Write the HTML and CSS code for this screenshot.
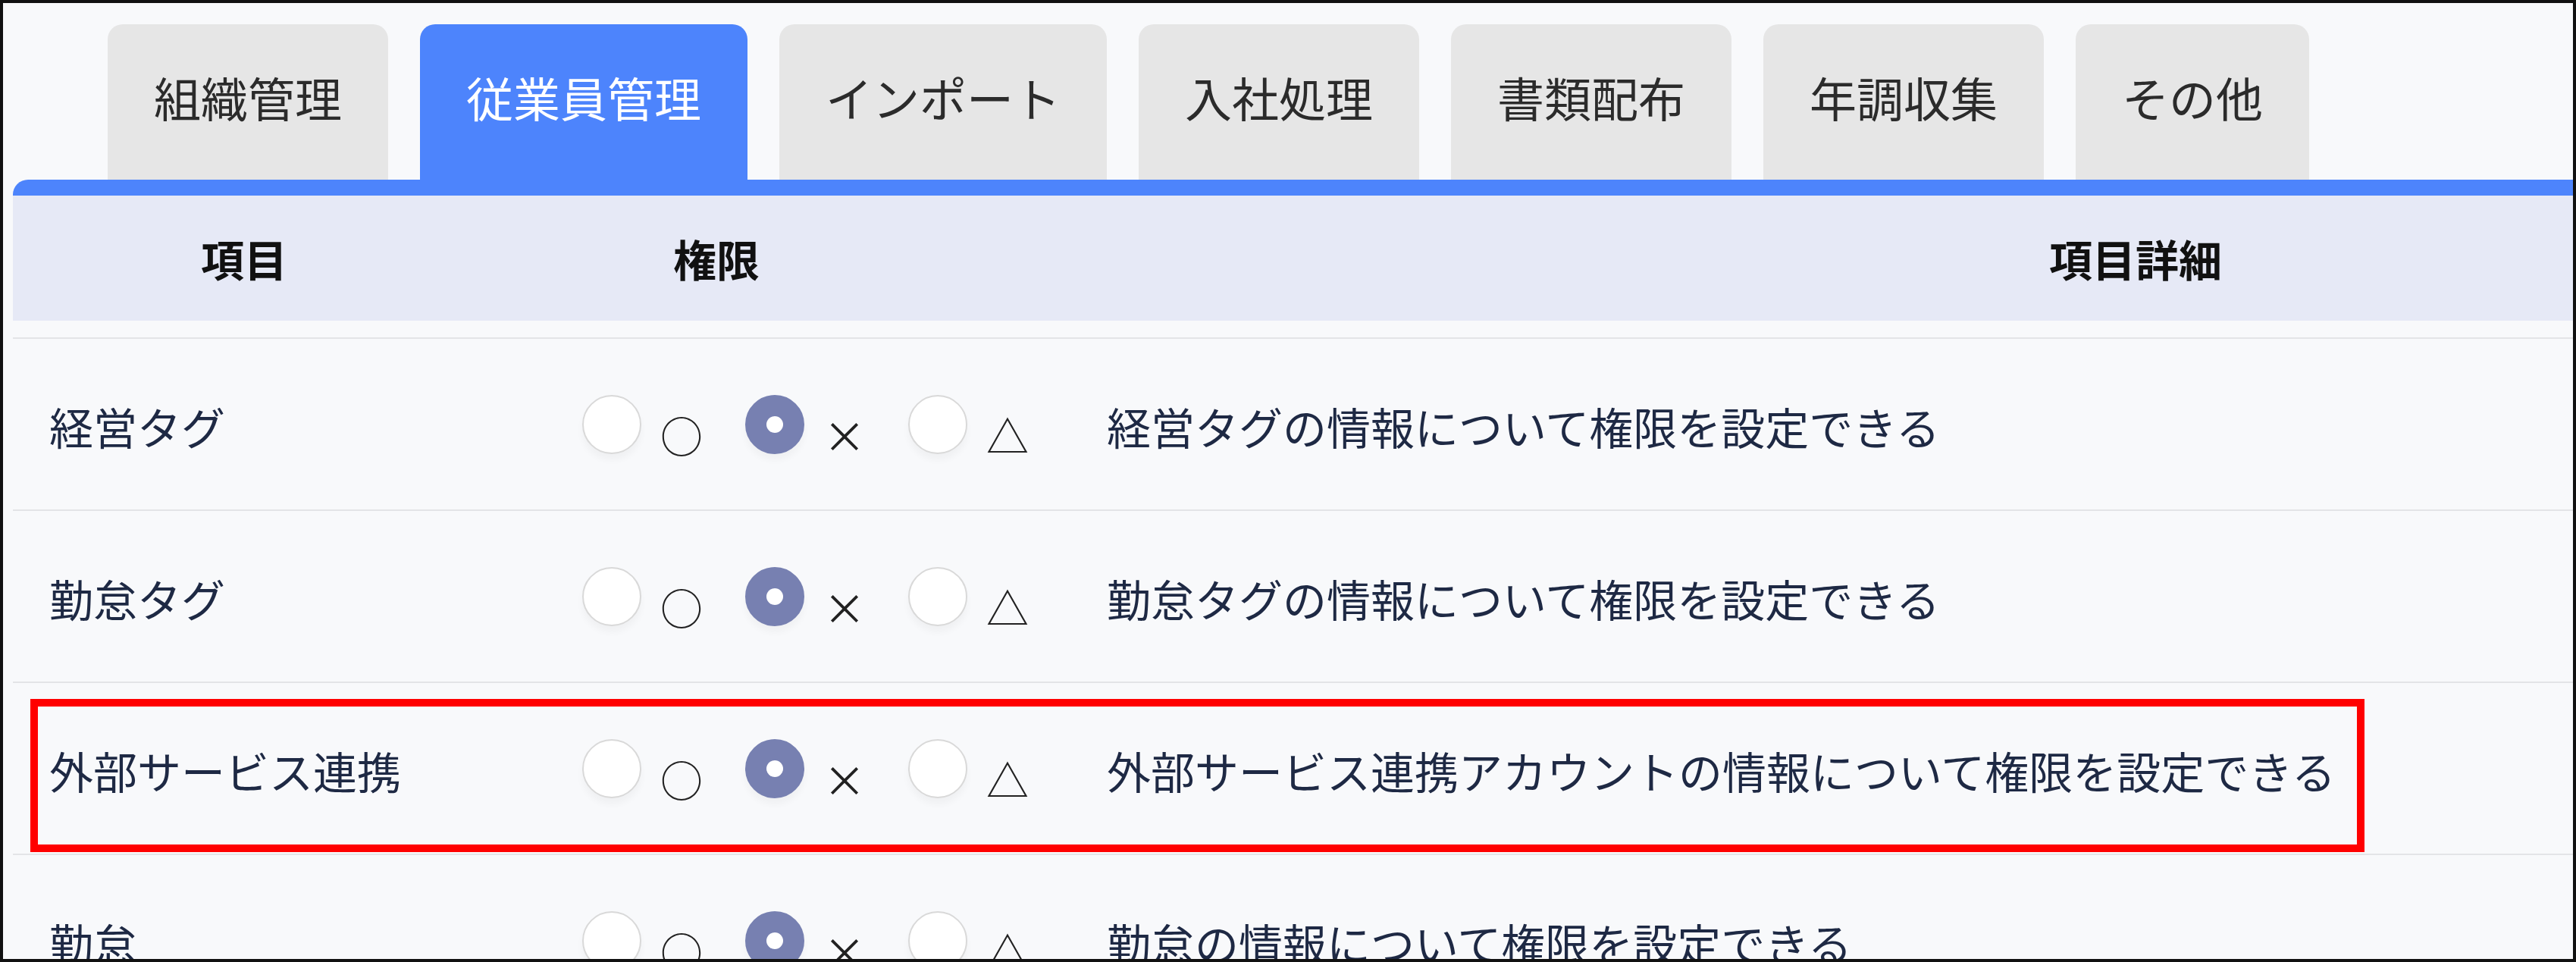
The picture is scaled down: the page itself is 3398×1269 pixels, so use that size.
FILE: index.html
```html
<!DOCTYPE html>
<html lang="ja">
<head>
<meta charset="utf-8">
<title>権限設定</title>
<link rel="stylesheet" href="styles.css">
</head>
<body>
<div class="frame">
  <div class="content">
    <nav class="tabs">
      <div class="tab">組織管理</div>
      <div class="tab active">従業員管理</div>
      <div class="tab">インポート</div>
      <div class="tab">入社処理</div>
      <div class="tab">書類配布</div>
      <div class="tab">年調収集</div>
      <div class="tab">その他</div>
    </nav>
    <div class="bar"></div>
    <div class="thead">
      <div class="th">項目</div>
      <div class="th">権限</div>
      <div class="th">項目詳細</div>
    </div>
    <div class="tbody">
      <div class="row">
        <div class="label">経営タグ</div>
        <div class="opts">
          <span class="opt"><span class="radio"></span><span class="mark">○</span></span>
          <span class="opt"><span class="radio on"></span><span class="mark">×</span></span>
          <span class="opt"><span class="radio"></span><span class="mark">△</span></span>
        </div>
        <div class="desc">経営タグの情報について権限を設定できる</div>
      </div>
      <div class="row">
        <div class="label">勤怠タグ</div>
        <div class="opts">
          <span class="opt"><span class="radio"></span><span class="mark">○</span></span>
          <span class="opt"><span class="radio on"></span><span class="mark">×</span></span>
          <span class="opt"><span class="radio"></span><span class="mark">△</span></span>
        </div>
        <div class="desc">勤怠タグの情報について権限を設定できる</div>
      </div>
      <div class="row highlighted">
        <div class="label">外部サービス連携</div>
        <div class="opts">
          <span class="opt"><span class="radio"></span><span class="mark">○</span></span>
          <span class="opt"><span class="radio on"></span><span class="mark">×</span></span>
          <span class="opt"><span class="radio"></span><span class="mark">△</span></span>
        </div>
        <div class="desc">外部サービス連携アカウントの情報について権限を設定できる</div>
        <div class="callout"></div>
      </div>
      <div class="row">
        <div class="label">勤怠</div>
        <div class="opts">
          <span class="opt"><span class="radio"></span><span class="mark">○</span></span>
          <span class="opt"><span class="radio on"></span><span class="mark">×</span></span>
          <span class="opt"><span class="radio"></span><span class="mark">△</span></span>
        </div>
        <div class="desc">勤怠の情報について権限を設定できる</div>
      </div>
    </div>
  </div>
</div>
</body>
</html>
```

FILE: styles.css
```css
html, body {
  margin: 0;
  padding: 0;
  background: #f8f9fb;
}

.frame {
  width: 3398px;
  height: 1269px;
  box-sizing: border-box;
  border: 4px solid #111;
  background: #f8f9fb;
  overflow: hidden;
  font-family: "Noto Sans CJK JP", "Noto Sans", sans-serif;
}

.content {
  margin-left: 13px;
}

.tabs {
  display: flex;
  gap: 42px;
  padding: 28px 0 0 125px;
}

.tab {
  height: 205px;
  box-sizing: border-box;
  padding: 0 61px 14px;
  display: flex;
  align-items: center;
  background: #e6e6e6;
  border-radius: 20px 20px 0 0;
  font-size: 62px;
  line-height: 1;
  color: #2b2b2b;
  white-space: nowrap;
}

.tab.active {
  background: #4d84fc;
  color: #fff;
}

.bar {
  height: 21px;
  background: #4d84fc;
  border-top-left-radius: 20px;
}

.thead {
  height: 165px;
  background: #e6e9f6;
  display: grid;
  grid-template-columns: 610px 636px 3108px;
  align-items: center;
  margin-bottom: 22px;
}

.th {
  text-align: center;
  font-size: 57px;
  font-weight: 700;
  color: #111;
  line-height: 1;
}

.row {
  position: relative;
  height: 227px;
  box-sizing: border-box;
  border-top: 2px solid #e3e4e7;
  display: grid;
  grid-template-columns: 751px 692px 1fr;
  align-items: center;
  color: #1e2944;
  font-size: 58px;
  line-height: 1;
}

.label {
  padding-left: 48px;
  padding-top: 4px;
  white-space: nowrap;
}

.opts {
  display: flex;
  align-items: center;
}

.opt {
  display: flex;
  align-items: center;
  width: 215px;
  flex: none;
}

.radio {
  position: relative;
  width: 78px;
  height: 78px;
  box-sizing: border-box;
  border-radius: 50%;
  border: 2px solid #d9d9d9;
  background: #fff;
  box-shadow: 0 8px 10px rgba(0, 0, 0, 0.035);
  flex: none;
}

.radio.on {
  background: #7780b1;
  border-color: #7780b1;
}

.radio.on::after {
  content: "";
  position: absolute;
  left: 50%;
  top: 50%;
  width: 22px;
  height: 22px;
  margin: -11px 0 0 -11px;
  border-radius: 50%;
  background: #fff;
}

.mark {
  margin-left: 25px;
  margin-top: 26px;
  width: 56px;
  font-size: 56px;
  line-height: 1;
  color: #222;
}

.desc {
  padding-left: 0;
  padding-top: 4px;
  white-space: nowrap;
}

.callout {
  position: absolute;
  left: 23px;
  top: 21px;
  width: 3079px;
  height: 202px;
  box-sizing: border-box;
  border: 10px solid #ff0000;
  pointer-events: none;
}
```
